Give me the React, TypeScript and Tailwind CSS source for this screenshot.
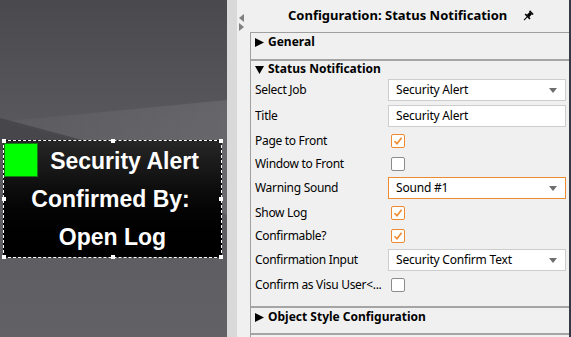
import type { ReactNode } from 'react'

const UI_FONT = { fontFamily: '"Noto Sans", "Open Sans", sans-serif' }
const WIDGET_FONT = { fontFamily: '"Liberation Sans", Arial, sans-serif' }

type Row =
  | { label: string; kind: 'combo'; value: string; focus?: boolean }
  | { label: string; kind: 'input'; value: string }
  | { label: string; kind: 'check'; checked: boolean }

const ROWS: Row[] = [
  { label: 'Select Job', kind: 'combo', value: 'Security Alert' },
  { label: 'Title', kind: 'input', value: 'Security Alert' },
  { label: 'Page to Front', kind: 'check', checked: true },
  { label: 'Window to Front', kind: 'check', checked: false },
  { label: 'Warning Sound', kind: 'combo', value: 'Sound #1', focus: true },
  { label: 'Show Log', kind: 'check', checked: true },
  { label: 'Confirmable?', kind: 'check', checked: true },
  { label: 'Confirmation Input', kind: 'combo', value: 'Security Confirm Text' },
  { label: 'Confirm as Visu User<...', kind: 'check', checked: false },
]

function CaretRight() {
  return (
    <svg width="9" height="9" viewBox="0 0 9 9" className="shrink-0">
      <polygon points="0,0 9,4.5 0,9" fill="#000" />
    </svg>
  )
}

function CaretDown() {
  return (
    <svg width="9" height="9" viewBox="0 0 9 9" className="shrink-0">
      <polygon points="0,1 9,1 4.5,9" fill="#000" />
    </svg>
  )
}

function SectionHeader({ open, children }: { open?: boolean; children: ReactNode }) {
  return (
    <div className="flex items-center gap-[4px] pl-[4px] h-[16px] text-[12px] leading-[16px] font-bold text-black">
      {open ? <CaretDown /> : <CaretRight />}
      <span>{children}</span>
    </div>
  )
}

function Checkbox({ checked }: { checked: boolean }) {
  return (
    <div
      className={`ml-[3px] w-[14px] h-[14px] rounded-[2px] bg-white border ${
        checked ? 'border-[#ee8a2f]' : 'border-[#8c8c8c]'
      } flex items-center justify-center`}
    >
      {checked && (
        <svg width="10" height="10" viewBox="0 0 10 10">
          <path d="M1.5 5.2 L4 7.8 L8.6 1.8" fill="none" stroke="#ee8a2f" strokeWidth="1.6" />
        </svg>
      )}
    </div>
  )
}

function Combo({ value, focus, arrow }: { value: string; focus?: boolean; arrow: boolean }) {
  return (
    <div
      className={`w-[178px] h-[22px] bg-white border ${
        focus ? 'border-[#ee8a2f]' : 'border-[#cdcdcd]'
      } flex items-center pl-[7px] pr-[8px] text-[12px] tracking-[-0.2px] text-black`}
    >
      <span className="flex-1">{value}</span>
      {arrow && (
        <svg width="8" height="5" viewBox="0 0 8 5">
          <polygon points="0,0 8,0 4,5" fill="#6e6e6e" />
        </svg>
      )}
    </div>
  )
}

function Pin() {
  return (
    <svg width="12" height="12" viewBox="0 0 12 12">
      <g transform="rotate(45 6 6)">
        <rect x="3.5" y="0.5" width="5" height="1.6" fill="#000" />
        <rect x="4.4" y="2" width="3.2" height="4" fill="#000" />
        <rect x="2.6" y="5.8" width="6.8" height="1.6" fill="#000" />
        <rect x="5.5" y="7.2" width="1" height="4.5" fill="#000" />
      </g>
    </svg>
  )
}

function Handle({ className }: { className: string }) {
  return <div className={`absolute w-[4px] h-[4px] bg-white ${className}`} />
}

function Canvas() {
  return (
    <div className="relative w-[227px] h-full shrink-0 overflow-hidden">
      <svg className="absolute inset-0" width="227" height="337" viewBox="0 0 227 337">
        <defs>
          <linearGradient id="bg" x1="0" y1="0" x2="0" y2="1">
            <stop offset="0" stopColor="#4a494e" />
            <stop offset="0.35" stopColor="#58575c" />
            <stop offset="1" stopColor="#626166" />
          </linearGradient>
          <linearGradient id="band" x1="0" y1="0" x2="1" y2="0">
            <stop offset="0" stopColor="#ffffff" stopOpacity="0.02" />
            <stop offset="1" stopColor="#ffffff" stopOpacity="0.09" />
          </linearGradient>
        </defs>
        <rect width="227" height="337" fill="url(#bg)" />
        <polygon points="0,122 227,100 227,215 120,150" fill="url(#band)" />
        <polygon points="0,118 90,142 0,150" fill="#3c3b40" opacity="0.6" />
      </svg>

      {/* widget on the canvas */}
      <div
        className="absolute left-[3px] top-[140px] w-[219px] h-[118px] border border-dashed border-white bg-gradient-to-b from-[#272727] to-[#000000] flex flex-col text-white font-bold text-[23px]"
        style={WIDGET_FONT}
      >
        <div className="absolute left-[0px] top-[2px] w-[34px] h-[34px] bg-[#00ff00] border border-[#137a13]" />
        <div className="h-[39px] flex items-center justify-center pl-[24px] pt-[1px]">Security Alert</div>
        <div className="h-[39px] flex items-center justify-center pr-[4px]">Confirmed By:</div>
        <div className="h-[39px] flex items-center justify-center">Open Log</div>
        <Handle className="-left-[2px] -top-[2px]" />
        <Handle className="left-[107px] -top-[2px]" />
        <Handle className="-right-[2px] -top-[2px]" />
        <Handle className="-left-[2px] top-[56px]" />
        <Handle className="-right-[2px] top-[56px]" />
        <Handle className="-left-[2px] -bottom-[2px]" />
        <Handle className="left-[107px] -bottom-[2px]" />
        <Handle className="-right-[2px] -bottom-[2px]" />
      </div>
    </div>
  )
}

export default function App() {
  return (
    <div className="w-[571px] h-[337px] flex overflow-hidden bg-[#f0f0f0]" style={UI_FONT}>
      <Canvas />
      <div className="w-[10px] h-full bg-[#d9d9d9] shrink-0" />

      {/* properties panel */}
      <div className="flex-1 flex h-full border-r-2 border-[#333a45]">
        <div className="w-[13px] shrink-0 flex flex-col items-center pt-[14px] gap-[1px] pr-[4px]">
          <svg width="5" height="8" viewBox="0 0 5 8">
            <polygon points="5,0 5,8 0,4" fill="#808080" />
          </svg>
          <svg width="5" height="8" viewBox="0 0 5 8">
            <polygon points="0,0 0,8 5,4" fill="#808080" />
          </svg>
        </div>

        <div className="flex-1 flex flex-col">
          <div className="h-[32px] flex items-center pl-[38px] gap-[15px] text-[13px] font-bold text-black">
            <span>Configuration: Status Notification</span>
            <Pin />
          </div>

          <div className="flex-1 flex flex-col border-l border-t border-[#a0a0a0]">
            <div className="h-[26px] pt-[1px]">
              <SectionHeader>General</SectionHeader>
            </div>
            <div className="h-[2px] bg-[#a5a5a5]" />

            <div className="flex flex-col pb-[10px]">
              <SectionHeader open>Status Notification</SectionHeader>
              {ROWS.map((row) => (
                <div
                  key={row.label}
                  className={`flex items-center pl-[4px] ${
                    row.kind === 'check' ? 'h-[23px]' : 'h-[26px]'
                  }`}
                >
                  <span className="w-[133px] shrink-0 text-[12px] tracking-[-0.3px] text-black whitespace-nowrap overflow-hidden">
                    {row.label}
                  </span>
                  {row.kind === 'check' && <Checkbox checked={row.checked} />}
                  {row.kind === 'combo' && <Combo value={row.value} focus={row.focus} arrow />}
                  {row.kind === 'input' && <Combo value={row.value} arrow={false} />}
                </div>
              ))}
            </div>
            <div className="h-[2px] bg-[#a5a5a5]" />

            <div className="h-[25px] pt-[1px]">
              <SectionHeader>Object Style Configuration</SectionHeader>
            </div>
            <div className="h-[2px] bg-[#a5a5a5]" />
          </div>
        </div>
      </div>
    </div>
  )
}
